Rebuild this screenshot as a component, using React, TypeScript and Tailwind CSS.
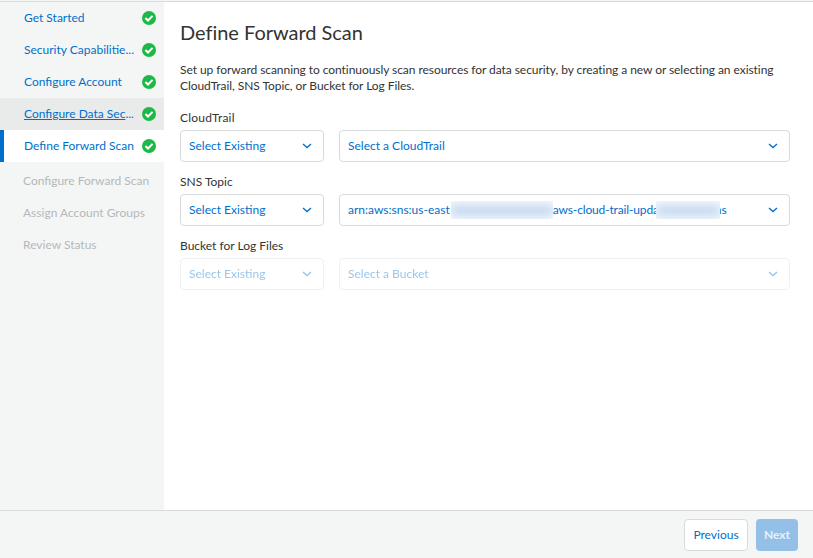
import React from "react";

type Step = { label: string; state: "done" | "hover" | "current"; clipped?: boolean };

const steps: Step[] = [
  { label: "Get Started", state: "done" },
  { label: "Security Capabilitie", state: "done", clipped: true },
  { label: "Configure Account", state: "done" },
  { label: "Configure Data Sec", state: "hover", clipped: true },
  { label: "Define Forward Scan", state: "current" },
];

const pending = ["Configure Forward Scan", "Assign Account Groups", "Review Status"];

const stepStyles = {
  done: "border-transparent",
  hover: "border-transparent bg-[#e9ebea]",
  current: "border-[#006fcc] bg-white",
};

function CheckIcon() {
  return (
    <svg className="h-[14px] w-[14px] shrink-0" viewBox="0 0 14 14" fill="none">
      <circle cx="7" cy="7" r="7" fill="#1db846" />
      <path d="M3.4 7 L6 9.5 L10.6 4.9" stroke="#fff" strokeWidth="2" />
    </svg>
  );
}

function Chevron() {
  return (
    <svg className="h-[6px] w-[10px] shrink-0" viewBox="0 0 10 6" fill="none">
      <path d="M1 1 L5 4.6 L9 1" stroke="#006fcc" strokeWidth="1.3" />
    </svg>
  );
}

function Select({ className, children }: { className: string; children: React.ReactNode }) {
  return (
    <button
      className={
        "flex h-8 items-center justify-between rounded border border-[#d9dbdb] bg-white pr-[11px] pl-2 text-[#006fcc] " +
        className
      }
    >
      <span className="flex items-center whitespace-nowrap">{children}</span>
      <Chevron />
    </button>
  );
}

function Redacted({ className }: { className: string }) {
  return (
    <span className={"relative h-[18px] overflow-hidden bg-[#f3f7fc] " + className}>
      <span className="absolute inset-x-0 top-[5px] h-[9px] bg-[#bdd4ee] blur-[5px]" />
    </span>
  );
}

function Field({
  label,
  disabled = false,
  labelClass = "",
  children,
}: {
  label: string;
  disabled?: boolean;
  labelClass?: string;
  children: React.ReactNode;
}) {
  return (
    <div className="flex h-16 flex-col">
      <label className={"h-[22px] pt-px leading-[18px] text-[#333] " + labelClass}>{label}</label>
      <div className={"flex gap-[15px] " + (disabled ? "opacity-40" : "")}>
        <Select className="w-[144px]">Select Existing</Select>
        <Select className="w-[451px]">{children}</Select>
      </div>
    </div>
  );
}

export default function App() {
  return (
    <div className="flex h-[558px] w-[813px] flex-col overflow-hidden bg-white font-['Lato',sans-serif] text-[12px]">
      <div className="h-[2px] shrink-0 border-b border-[#d9dbdb] bg-[#f4f6f5]" />
      <div className="flex min-h-0 flex-1">
        <nav className="w-[164px] shrink-0 bg-[#f4f6f5]">
          {steps.map((s) => (
            <div
              key={s.label}
              className={"flex h-8 items-center border-l-4 pr-2 pl-5 text-[#006fcc] " + stepStyles[s.state]}
            >
              <span className="flex-1 whitespace-nowrap">
                <span className={s.state === "hover" ? "underline underline-offset-1" : ""}>{s.label}</span>
                {s.clipped && "..."}
              </span>
              <CheckIcon />
            </div>
          ))}
          <div className="pt-[3px] text-[#b5b8b9]">
            {pending.map((p) => (
              <div key={p} className="flex h-8 items-center pl-[23px] whitespace-nowrap">
                {p}
              </div>
            ))}
          </div>
        </nav>
        <main className="flex-1 pt-[18px] pl-4">
          <h1 className="text-[20px] leading-6 tracking-[-0.03px] text-[#333]">Define Forward Scan</h1>
          <p className="mt-[18px] leading-4 tracking-[-0.06px] whitespace-nowrap text-[#333]">
            Set up forward scanning to continuously scan resources for data security, by creating a new or selecting an existing
            <br />
            CloudTrail, SNS Topic, or Bucket for Log Files.
          </p>
          <div className="mt-[14px]">
            <Field label="CloudTrail" labelClass="tracking-[0.2px]">
              Select a CloudTrail
            </Field>
            <Field label="SNS Topic">
              <span>arn:aws:sns:us-east</span>
              <Redacted className="ml-px w-[102px]" />
              <span className="tracking-[-0.15px]">aws-cloud-trail-upda</span>
              <Redacted className="-ml-[3px] w-[64px]" />
              <span className="-ml-[5px]">ns</span>
            </Field>
            <Field label="Bucket for Log Files" disabled>
              Select a Bucket
            </Field>
          </div>
        </main>
      </div>
      <footer className="flex h-12 shrink-0 items-center justify-end gap-2 border-t border-[#d9dbdb] bg-[#f4f6f5] pr-[15px]">
        <button className="h-8 w-16 rounded border border-[#d9dbdb] bg-white text-[#006fcc]">Previous</button>
        <button className="h-8 w-[42px] rounded bg-[#94c0e8] font-bold text-[#e6f0fa]">Next</button>
      </footer>
    </div>
  );
}
